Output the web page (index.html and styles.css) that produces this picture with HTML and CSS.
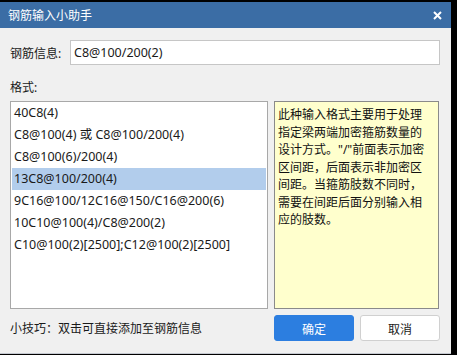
FILE: index.html
```html
<!DOCTYPE html>
<html lang="zh-CN">
<head>
    <meta charset="UTF-8">
    <title>钢筋输入小助手</title>
    <link rel="stylesheet" href="styles.css">
</head>
<body>
    <div class="dialog">
        <div class="title-bar">
            <span class="title">钢筋输入小助手</span>
            <span class="close">
                <svg width="9" height="9" viewBox="0 0 9 9"><path d="M1 1 L8 8 M8 1 L1 8" stroke="#fff" stroke-width="2"/></svg>
            </span>
        </div>

        <div class="content">
            <div class="info-row">
                <label for="info">钢筋信息:</label>
                <input type="text" id="info" value="C8@100/200(2)">
            </div>

            <div class="section-label">格式:</div>

            <div class="main">
                <ul class="format-list">
                    <li>40C8(4)</li>
                    <li>C8@100(4) 或 C8@100/200(4)</li>
                    <li>C8@100(6)/200(4)</li>
                    <li class="selected">13C8@100/200(4)</li>
                    <li>9C16@100/12C16@150/C16@200(6)</li>
                    <li>10C10@100(4)/C8@200(2)</li>
                    <li>C10@100(2)[2500];C12@100(2)[2500]</li>
                </ul>
                <div class="note">此种输入格式主要用于处理指定梁两端加密箍筋数量的设计方式。"/"前面表示加密区间距，后面表示非加密区间距。当箍筋肢数不同时，需要在间距后面分别输入相应的肢数。</div>
            </div>

            <div class="footer">
                <span class="tip">小技巧：双击可直接添加至钢筋信息</span>
                <button class="btn primary">确定</button>
                <button class="btn">取消</button>
            </div>
        </div>
    </div>
</body>
</html>
```

FILE: styles.css
```css
body {
    margin: 0;
    background-color: #000;
    font-family: "Noto Sans", "Noto Sans CJK SC", sans-serif;
    font-size: 12px;
    color: #1a1a1a;
}

.dialog {
    width: 451px;
    height: 352px;
    margin-top: 2px;
    background-color: #f0f0f0;
    border-bottom: 1px solid #c4c8d0;
    box-sizing: border-box;
    display: flex;
    flex-direction: column;
}

.title-bar {
    height: 26px;
    flex-shrink: 0;
    background-color: #3b6da5;
    color: #fff;
    display: flex;
    align-items: center;
    justify-content: space-between;
    padding: 0 9px 0 8px;
}

.close {
    display: flex;
    margin-top: 1px;
}

.content {
    padding: 12px 11px 0 10px;
    display: flex;
    flex-direction: column;
}

.info-row {
    display: flex;
    align-items: center;
}

.info-row label {
    width: 60px;
}

.info-row input {
    width: 370px;
    height: 25px;
    box-sizing: border-box;
    border: 1px solid #c6c6c6;
    background-color: #fff;
    padding: 0 0 0 3px;
    font-family: "Noto Sans", "Noto Sans CJK SC", sans-serif;
    font-size: 12.5px;
    color: #1a1a1a;
    outline: none;
}

.section-label {
    margin-top: 14px;
    line-height: 17px;
}

.main {
    display: flex;
    gap: 6px;
    margin-top: 5px;
    height: 208px;
}

.format-list {
    list-style: none;
    margin: 0;
    padding: 0 1px;
    width: 258px;
    box-sizing: border-box;
    border: 1px solid #a8a8a8;
    background-color: #fff;
}

.format-list li {
    height: 22px;
    line-height: 22px;
    padding-left: 2px;
    font-size: 12.5px;
    white-space: nowrap;
}

.format-list li.selected {
    background-color: #b2cdec;
}

.note {
    width: 165px;
    box-sizing: border-box;
    border: 1px solid #8a8a8a;
    background-color: #ffffcd;
    padding: 4px 10px 0 3px;
    line-height: 17.5px;
    color: #111;
}

.footer {
    display: flex;
    align-items: center;
    gap: 6px;
    margin-top: 6px;
}

.tip {
    flex: 1;
}

.btn {
    width: 80px;
    height: 26px;
    border: 1px solid #d0d0d0;
    border-radius: 3px;
    background-color: #fff;
    font-family: "Noto Sans CJK SC", sans-serif;
    font-size: 12px;
    color: #1a1a1a;
    padding: 0;
}

.btn.primary {
    background-color: #2c7ee0;
    border-color: #2c7ee0;
    color: #fff;
}
```
